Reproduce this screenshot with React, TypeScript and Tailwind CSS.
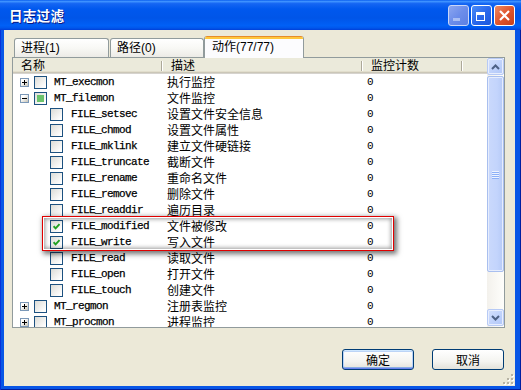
import React from "react";

type Row = {
  level: 0 | 1;
  exp?: "+" | "-";
  state?: "none" | "checked" | "partial";
  name: string;
  desc: string;
};

const rows: Row[] = [
  { level: 0, exp: "+", state: "none", name: "MT_execmon", desc: "执行监控" },
  { level: 0, exp: "-", state: "partial", name: "MT_filemon", desc: "文件监控" },
  { level: 1, name: "FILE_setsec", desc: "设置文件安全信息" },
  { level: 1, name: "FILE_chmod", desc: "设置文件属性" },
  { level: 1, name: "FILE_mklink", desc: "建立文件硬链接" },
  { level: 1, name: "FILE_truncate", desc: "截断文件" },
  { level: 1, name: "FILE_rename", desc: "重命名文件" },
  { level: 1, name: "FILE_remove", desc: "删除文件" },
  { level: 1, name: "FILE_readdir", desc: "遍历目录" },
  { level: 1, state: "checked", name: "FILE_modified", desc: "文件被修改" },
  { level: 1, state: "checked", name: "FILE_write", desc: "写入文件" },
  { level: 1, name: "FILE_read", desc: "读取文件" },
  { level: 1, name: "FILE_open", desc: "打开文件" },
  { level: 1, name: "FILE_touch", desc: "创建文件" },
  { level: 0, exp: "+", state: "none", name: "MT_regmon", desc: "注册表监控" },
  { level: 0, exp: "+", state: "none", name: "MT_procmon", desc: "进程监控" },
];

function Expander({ sign }: { sign: "+" | "-" }) {
  return (
    <span className="relative w-[9px] h-[9px] shrink-0 border border-[#7B98B8] bg-[linear-gradient(135deg,#FFFFFF_30%,#C6C3B6_100%)]">
      <span className="absolute left-[1px] top-[3px] w-[5px] h-[1px] bg-black" />
      {sign === "+" && <span className="absolute left-[3px] top-[1px] w-[1px] h-[5px] bg-black" />}
    </span>
  );
}

function Check({ state }: { state?: "none" | "checked" | "partial" }) {
  return (
    <span className="w-[13px] h-[13px] shrink-0 border border-[#1C5180] bg-[linear-gradient(135deg,#DCDCD7_0%,#FFFFFF_90%)] flex items-center justify-center">
      {state === "partial" && <span className="w-[7px] h-[7px] bg-[#6CC36C]" />}
      {state === "checked" && (
        <svg width="7" height="7" viewBox="0 0 7 7">
          <path d="M0.6 3.2 L2.6 5.3 L6.5 1.1" fill="none" stroke="#21A121" strokeWidth="1.9" />
        </svg>
      )}
    </span>
  );
}

function HeaderCell({ w, label }: { w: string; label: string }) {
  return (
    <div className={`relative h-full flex items-center pl-[8px] ${w}`}>
      <span className="text-[12px] leading-none">{label}</span>
      <span className="absolute right-0 top-[3px] h-[10px] w-[2px] border-l border-[#ACA899] bg-white" />
    </div>
  );
}

function ScrollArrow({ up }: { up: boolean }) {
  return (
    <div className="h-[17px] w-[17px] rounded-[2px] border border-[#B7CAF5] bg-[linear-gradient(135deg,#D5E1FD_0%,#C1D3FB_50%,#B0C6F8_100%)] shadow-[inset_0_0_0_1px_#E8EEFD] flex items-center justify-center">
      <svg width="9" height="6" viewBox="0 0 9 6">
        <path
          d={up ? "M1 5 L4.5 1.5 L8 5" : "M1 1 L4.5 4.5 L8 1"}
          fill="none"
          stroke="#4D6185"
          strokeWidth="2"
        />
      </svg>
    </div>
  );
}

function Scrollbar() {
  return (
    <div className="w-[17px] h-full flex flex-col bg-[linear-gradient(90deg,#F3F1EC,#FEFEFB)]">
      <ScrollArrow up />
      <div className="mt-[1px] h-[196px] w-[17px] rounded-[2px] border border-[#A9BFEF] bg-[linear-gradient(90deg,#CAD9FC_0%,#C3D4FC_60%,#B6CAF7_100%)] shadow-[inset_0_0_0_1px_#E6EDFD] flex flex-col items-center justify-center">
        <span className="w-[7px] h-[1px] bg-[#EEF3FE] shadow-[0_1px_#8CB0F8]" />
        <span className="w-[7px] h-[1px] bg-[#EEF3FE] shadow-[0_1px_#8CB0F8] mt-[1px]" />
        <span className="w-[7px] h-[1px] bg-[#EEF3FE] shadow-[0_1px_#8CB0F8] mt-[1px]" />
        <span className="w-[7px] h-[1px] bg-[#EEF3FE] shadow-[0_1px_#8CB0F8] mt-[1px]" />
      </div>
      <div className="flex-1" />
      <ScrollArrow up={false} />
      <div className="h-[1px]" />
    </div>
  );
}

function ListRow({ r }: { r: Row }) {
  return (
    <div className="h-[16px] flex items-center shrink-0">
      <div className="w-[150px] flex items-center shrink-0">
        {r.level === 0 ? (
          <div className="flex items-center pl-[7px]">
            <Expander sign={r.exp ?? "+"} />
            <span className="ml-[5px]">
              <Check state={r.state} />
            </span>
            <span className="ml-[7px] mt-[1px] font-['Liberation_Mono',monospace] text-[11px] tracking-[-0.6px] leading-none whitespace-nowrap text-black [-webkit-text-stroke:0.25px_black]">
              {r.name}
            </span>
          </div>
        ) : (
          <div className="flex items-center pl-[37px]">
            <Check state={r.state} />
            <span className="ml-[8px] mt-[1px] font-['Liberation_Mono',monospace] text-[11px] tracking-[-0.6px] leading-none whitespace-nowrap text-black [-webkit-text-stroke:0.25px_black]">
              {r.name}
            </span>
          </div>
        )}
      </div>
      <div className="w-[200px] pl-[4px] text-[12px] leading-none whitespace-nowrap shrink-0">{r.desc}</div>
      <div className="pl-[4px] mt-[1px] font-['Liberation_Mono',monospace] text-[11px] leading-none">0</div>
    </div>
  );
}

function Tab({ label, w, ml }: { label: string; w: string; ml: string }) {
  return (
    <div
      className={`h-[19px] ${w} ${ml} rounded-t-[3px] border border-b-0 border-[#919B9C] bg-[linear-gradient(180deg,#FFFFFF_0%,#F8F8F5_50%,#ECEBE6_100%)] flex items-center pl-[6px] text-[12px] leading-none`}
    >
      {label}
    </div>
  );
}

export default function App() {
  return (
    <div className="w-[521px] h-[390px] flex flex-col overflow-hidden font-['Liberation_Sans','Noto_Sans_CJK_SC',sans-serif] text-black">
      {/* Title bar */}
      <div className="h-[30px] shrink-0 flex items-center pl-[9px] bg-[linear-gradient(180deg,#0A5FEF_0%,#3D91FF_5%,#1566F3_12%,#0058EE_30%,#0055E8_60%,#0060F6_85%,#0057EC_93%,#003FD8_100%)]">
        <span className="font-['Noto_Sans_CJK_SC',sans-serif] text-[13.5px] font-bold tracking-[0.3px] text-white [text-shadow:1px_1px_#0A1883]">
          日志过滤
        </span>
        <div className="ml-auto flex items-center gap-[2px] pr-[6px]">
          <div className="relative w-[21px] h-[21px] rounded-[3px] border border-[#C9D6F8] bg-[linear-gradient(135deg,#8BA6F0_0%,#6C8DEA_50%,#5D80E4_100%)]">
            <span className="absolute left-[4px] top-[12px] w-[7px] h-[3px] bg-[#A9BEF4]" />
          </div>
          <div className="relative w-[21px] h-[21px] rounded-[3px] border border-white bg-[linear-gradient(135deg,#4C8DF8_0%,#2A68EC_50%,#1B57DD_100%)]">
            <span className="absolute left-[4px] top-[6px] w-[9px] h-[9px] border border-white border-t-[3px]" />
          </div>
          <div className="relative w-[21px] h-[21px] rounded-[3px] border border-white bg-[linear-gradient(135deg,#EE8A62_0%,#E0552E_50%,#C63F1B_100%)] flex items-center justify-center">
            <svg width="11" height="11" viewBox="0 0 11 11">
              <path d="M1 1 L10 10 M10 1 L1 10" stroke="white" strokeWidth="2.2" />
            </svg>
          </div>
        </div>
      </div>

      {/* Body with frame */}
      <div className="flex-1 flex flex-col bg-[#0856E6] pl-[4px] pr-[6px] pb-[4px] shadow-[inset_1px_0_#0831D9,inset_-1px_0_#001EA0,inset_0_-1px_#001EA0]">
        <div className="relative flex-1 bg-[#ECE9D8] pl-[8px] pt-[6px] flex flex-col">
          {/* Tabs */}
          <div className="relative z-10 h-[22px] flex items-end -mb-[1px]">
            <div className="mb-[1px] flex items-end">
              <Tab label="进程(1)" w="w-[95px]" ml="ml-[2px]" />
              <Tab label="路径(0)" w="w-[94px]" ml="ml-[1px]" />
            </div>
            <div className="h-[22px] w-[100px] rounded-t-[3px] border border-b-0 border-[#919B9C] border-t-0 bg-[#FCFCFE] flex flex-col overflow-hidden">
              <div className="h-[1px] bg-[#E68B2C]" />
              <div className="h-[2px] bg-[#FFC73C]" />
              <div className="flex-1 flex items-center pl-[7px] pb-[3px] text-[12px] leading-none">动作(77/77)</div>
            </div>
          </div>

          {/* List view */}
          <div className="relative h-[271px] w-[493px] border border-[#919B9C] bg-white flex">
            <div className="w-[474px] h-full flex flex-col overflow-hidden">
              <div className="h-[16px] shrink-0 flex bg-[#EBEADB] shadow-[inset_0_-1px_#D6D3CE,inset_0_-2px_#CBC7B8,inset_0_-3px_#E2DECD]">
                <HeaderCell w="w-[150px]" label="名称" />
                <HeaderCell w="w-[200px]" label="描述" />
                <HeaderCell w="w-[100px]" label="监控计数" />
              </div>
              <div className="font-['Noto_Sans_CJK_SC',sans-serif] flex flex-col">
                {rows.map((r) => (
                  <ListRow key={r.name} r={r} />
                ))}
              </div>
            </div>
            <Scrollbar />

            {/* Highlight box */}
            <div className="absolute left-[29px] top-[158px] w-[352px] h-[35px] border border-[#E00000] shadow-[2px_2px_5px_1px_rgba(0,0,0,0.55),inset_0_0_0_1px_#FFFFFF,inset_0_0_4px_2px_rgba(0,0,0,0.4)] pointer-events-none" />
          </div>

          {/* Buttons */}
          <div className="mt-[21px] flex w-[493px] justify-end gap-[18px] pr-[1px]">
            <div className="h-[21px] w-[72px] rounded-[3px] border border-[#003C74] bg-[linear-gradient(180deg,#FFFFFF_0%,#F4F4F0_60%,#E3E2DA_100%)] shadow-[inset_0_1px_#CEE7FF,inset_0_-1px_#6982EE,inset_1px_0_#B8D2F8,inset_-1px_0_#B8D2F8,inset_0_2px_#BCD4F6,inset_0_-2px_#89ADE4] flex items-center justify-center font-['Noto_Sans_CJK_SC',sans-serif] text-[12px] leading-none">
              确定
            </div>
            <div className="h-[21px] w-[72px] rounded-[3px] border border-[#003C74] bg-[linear-gradient(180deg,#FFFFFF_0%,#F4F4F0_60%,#E3E2DA_100%)] flex items-center justify-center font-['Noto_Sans_CJK_SC',sans-serif] text-[12px] leading-none">
              取消
            </div>
          </div>

          {/* Resize grip */}
          <svg className="absolute right-[1px] bottom-[1px]" width="11" height="11" viewBox="0 0 11 11">
            {[
              [8, 0],
              [4, 4],
              [8, 4],
              [0, 8],
              [4, 8],
              [8, 8],
            ].map(([x, y], i) => (
              <g key={i}>
                <rect x={x + 1} y={y + 1} width="2" height="2" fill="#FFFFFF" />
                <rect x={x} y={y} width="2" height="2" fill="#B7B3A4" />
              </g>
            ))}
          </svg>
        </div>
      </div>
    </div>
  );
}
